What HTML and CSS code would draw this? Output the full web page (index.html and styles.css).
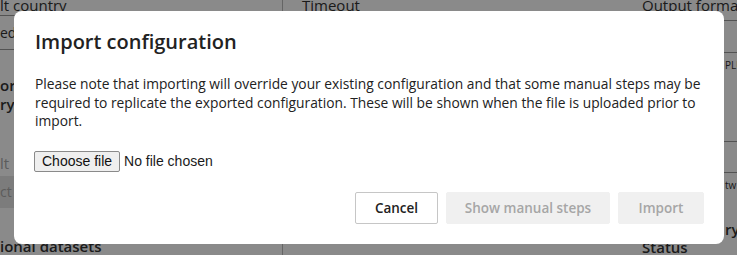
FILE: index.html
```html
<!DOCTYPE html>
<html lang="en">
<head>
<meta charset="utf-8">
<title>Import configuration</title>
<link rel="stylesheet" href="styles.css">
</head>
<body>
<div class="page" aria-hidden="true">
  <div class="col col-a">
    <div class="hdr">lt country</div>
    <div class="field">ed</div>
    <div class="lbl two">or<br>ry</div>
    <div class="lbl muted">lt</div>
    <div class="field dark">ct a</div>
    <div class="lbl last">ional datasets</div>
  </div>
  <div class="col col-b">
    <div class="hdr">Timeout</div>
  </div>
  <div class="col col-c">
    <div class="stripe"></div>
    <div class="col-c-body">
      <div class="hdr">Output format</div>
      <div class="field line-a"></div>
      <div class="note peek">PLU</div>
      <div class="field line-b"></div>
      <div class="note peek">tw</div>
      <div class="lbl peek ry">ry</div>
      <div class="lbl status">Status</div>
    </div>
  </div>
</div>

<div class="overlay"></div>

<div class="modal" role="dialog" aria-labelledby="dlg-title">
  <h2 id="dlg-title" class="modal-title">Import configuration</h2>
  <p class="modal-text">Please note that importing will override your existing configuration and that some manual steps may be required to replicate the exported configuration. These will be shown when the file is uploaded prior to import.</p>
  <label class="file">
    <input class="file-input" type="file">
    <span class="file-btn">Choose file</span>
    <span class="file-name">No file chosen</span>
  </label>
  <div class="modal-footer">
    <button class="btn btn-default" type="button">Cancel</button>
    <button class="btn btn-disabled btn-steps" type="button" disabled>Show manual steps</button>
    <button class="btn btn-disabled btn-import" type="button" disabled>Import</button>
  </div>
</div>
</body>
</html>
```

FILE: styles.css
```css
html, body {
  margin: 0;
  padding: 0;
  background: #ffffff;
  overflow: hidden;
}

body {
  font-family: "Open Sans", "Noto Sans", sans-serif;
  color: #333;
  width: 737px;
  height: 255px;
}

/* ---------- page behind the dialog ---------- */
.page {
  display: grid;
  grid-template-columns: 282px 308px 1fr;
  height: 255px;
}

.col {
  display: flex;
  flex-direction: column;
  align-items: flex-start;
}

.hdr {
  font-size: 15px;
  line-height: 20px;
  margin-top: -5px;
  white-space: nowrap;
  color: #333;
}

.lbl {
  font-size: 15px;
  font-weight: 600;
  line-height: 19px;
  white-space: nowrap;
}

.field {
  box-sizing: border-box;
  align-self: stretch;
  height: 35px;
  border-top: 1px solid #999;
  border-bottom: 1px solid #999;
  font-size: 14px;
  line-height: 33px;
  white-space: nowrap;
}

.col-a .field:first-of-type {
  margin-top: 3px;
}

.lbl.two {
  margin-top: 26px;
}

.lbl.muted {
  margin-top: 40px;
  color: #aaa;
  font-weight: 400;
}

.field.dark {
  margin-top: 3px;
  height: 32px;
  border: none;
  background: #e6e6e6;
  color: #aaa;
  line-height: 32px;
}

.lbl.last {
  margin-top: 29px;
}

.col-b {
  border-left: 1px solid #bbb;
  padding-left: 19px;
}

.col-c {
  flex-direction: row;
}

.stripe {
  width: 29px;
  border-left: 1px solid #bbb;
  border-right: 1px solid #bbb;
  background: #f4f4f4;
}

.col-c-body {
  display: flex;
  flex-direction: column;
  align-items: flex-start;
  padding-left: 21px;
  flex: 1;
}

.peek {
  margin-left: 83px;
}

.field.line-a {
  margin-top: 5px;
  height: 33px;
}

.field.line-b {
  margin-top: 69px;
  height: 32px;
}

.note {
  font-size: 10px;
  line-height: 14px;
  margin-top: 5px;
  white-space: nowrap;
}

.lbl.ry {
  margin-top: 28px;
}

.lbl.status {
  margin-top: -1px;
}

.overlay {
  position: fixed;
  inset: 0;
  background: rgba(0, 0, 0, 0.46);
}

/* ---------- dialog ---------- */
.modal {
  position: fixed;
  left: 14px;
  top: 11px;
  width: 710px;
  height: 233px;
  box-sizing: border-box;
  background: #fff;
  border-radius: 8px;
  padding: 17px 20px 20px 21px;
  display: flex;
  flex-direction: column;
  align-items: flex-start;
}

.modal-title {
  margin: 0;
  font-size: 20px;
  line-height: 28px;
  font-weight: 600;
  color: #222;
}

.modal-text {
  margin: 19px 0 0;
  font-size: 13.8px;
  line-height: 18.5px;
  color: #222;
}

.file {
  margin: 20px 0 0 -1px;
  display: flex;
  align-items: center;
  gap: 4px;
  font-family: "Liberation Sans", Arial, sans-serif;
  font-size: 14px;
  color: #1a1a1a;
  cursor: pointer;
}

.file-input {
  display: none;
}

.file-btn {
  box-sizing: border-box;
  height: 21px;
  line-height: 19px;
  padding: 0 7px;
  border: 1px solid #8a8a8a;
  border-radius: 2px;
  background: #efefef;
  color: #111;
}

.modal-footer {
  margin-top: auto;
  align-self: stretch;
  display: flex;
  justify-content: flex-end;
  gap: 8px;
}

.btn {
  height: 32px;
  box-sizing: border-box;
  border-radius: 2px;
  font-family: "Open Sans", "Noto Sans", sans-serif;
  font-size: 13.5px;
  font-weight: 600;
  padding: 0;
}

.btn-default {
  width: 83px;
  background: #fff;
  border: 1px solid #c6c6c6;
  color: #222;
}

.btn-disabled {
  background: #f0f0f0;
  border: 1px solid #f0f0f0;
  color: #a6a6a6;
}

.btn-steps {
  width: 164px;
}

.btn-import {
  width: 86px;
}
```
